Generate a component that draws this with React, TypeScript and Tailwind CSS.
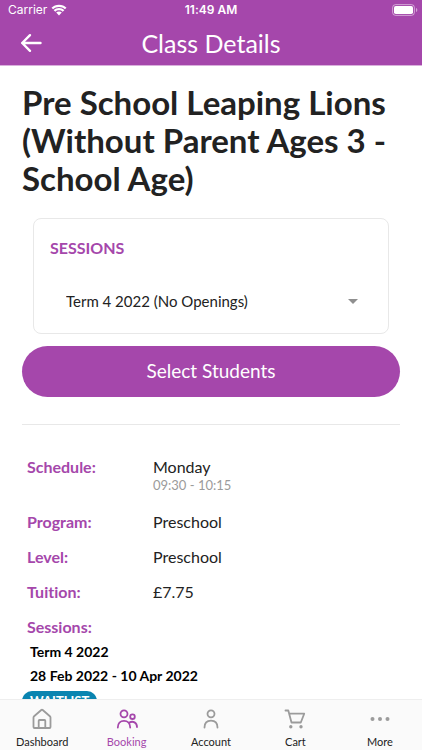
import type { ReactNode } from 'react'

interface DetailRowProps {
  label: string
  children?: ReactNode
}

interface TabProps {
  label: string
  active?: boolean
  children: ReactNode
}

function DetailRow({ label, children }: DetailRowProps) {
  return (
    <div className="flex">
      <dt className="w-[126px] shrink-0 font-bold text-[#a547ab]">{label}</dt>
      <dd className="text-[#222222]">{children}</dd>
    </div>
  )
}

function Tab({ label, active = false, children }: TabProps) {
  return (
    <a
      href="#"
      aria-current={active ? 'page' : undefined}
      className={
        active
          ? 'flex flex-1 flex-col items-center gap-1 text-[#a547ab]'
          : 'flex flex-1 flex-col items-center gap-1 text-[#9b9b9b]'
      }
    >
      <svg
        viewBox="0 0 22 22"
        className="size-[22px]"
        fill="none"
        stroke="currentColor"
        strokeWidth="1.8"
        strokeLinecap="round"
        strokeLinejoin="round"
        aria-hidden="true"
      >
        {children}
      </svg>
      <span className={active ? 'text-[11px] leading-4' : 'text-[11px] leading-4 text-[#222222]'}>
        {label}
      </span>
    </a>
  )
}

function StatusBar() {
  return (
    <div className="grid h-5 grid-cols-3 items-center px-2 font-[Inter,sans-serif] text-[12px]">
      <div className="flex items-center gap-1">
        <span>Carrier</span>
        <svg viewBox="0 0 16 12" className="h-3 w-4" fill="currentColor" aria-label="Wi-Fi">
          <path d="M8 .8C5 .8 2.500 1.900.500 3.700L2.100 5.300C3.700 3.900 5.700 3 8 3s4.300.900 5.900 2.300l1.600-1.600C13.500 1.900 11 .8 8 .8z" />
          <path d="M8 4.100c-2 0-3.900.800-5.300 2.100l1.600 1.500C5.300 6.800 6.500 6.300 8 6.300s2.700.500 3.700 1.400l1.600-1.500C11.900 4.900 10 4.100 8 4.100z" />
          <path d="M8 7.400c-1.100 0-2.100.400-2.800 1.200L8 11.400l2.800-2.800C10.100 7.800 9.100 7.400 8 7.400z" />
        </svg>
      </div>
      <span className="text-center font-semibold">11:49 AM</span>
      <svg viewBox="0 0 26 12" className="-mr-1 h-3 w-[26px] justify-self-end" aria-label="Battery full">
        <rect x=".6" y=".6" width="21.800" height="10.800" rx="3" fill="none" stroke="white" strokeOpacity=".5" />
        <rect x="2" y="2" width="19" height="8" rx="1.800" fill="white" />
        <path d="M24 4v4c.800-.300 1.300-1.100 1.300-2S24.800 4.300 24 4z" fill="white" fillOpacity=".5" />
      </svg>
    </div>
  )
}

export default function App() {
  return (
    <div className="flex h-dvh flex-col bg-white font-[Lato,sans-serif] text-[#222222] [font-variant-ligatures:none]">
      <header className="shrink-0 border-b border-[#d9b0dc] bg-[#a547ab] text-white">
        <StatusBar />
        <div className="grid h-[45px] grid-cols-[40px_1fr_40px] items-center px-5">
          <button type="button" aria-label="Back">
            <svg
              viewBox="0 0 22 20"
              className="h-5 w-[22px]"
              fill="none"
              stroke="currentColor"
              strokeWidth="2.400"
              strokeLinecap="round"
              strokeLinejoin="round"
            >
              <path d="M20.500 10H2.200M10 2.200L2.200 10l7.800 7.800" />
            </svg>
          </button>
          <h1 className="text-center text-[25px] leading-8">Class Details</h1>
        </div>
      </header>

      <main className="min-h-0 flex-1 overflow-hidden px-[22px] pt-[17px]">
        <h2 className="text-[33px] leading-[38px] font-bold">
          Pre School Leaping Lions (Without Parent Ages 3 - School Age)
        </h2>

        <section className="mx-[11px] mt-[21px] rounded-lg border border-[#e8e8e8] px-4 pt-[19px] pb-[14px]">
          <label htmlFor="session" className="block text-[16px] leading-5 font-bold text-[#a547ab]">
            SESSIONS
          </label>
          <div className="relative mt-[25px]">
            <select
              id="session"
              className="h-9 w-full appearance-none bg-transparent px-4 text-[15px] text-[#222222]"
            >
              <option>Term 4 2022 (No Openings)</option>
            </select>
            <svg
              viewBox="0 0 10 5"
              className="pointer-events-none absolute top-4 right-[14px] h-[5px] w-[10px]"
              fill="#8f8f8f"
              aria-hidden="true"
            >
              <path d="M0 0h10L5 5z" />
            </svg>
          </div>
        </section>

        <button
          type="button"
          className="mt-3 h-[51px] w-full rounded-full bg-[#a547ab] text-[19px] text-white"
        >
          Select Students
        </button>

        <hr className="mt-[27px] border-[#e8e8e8]" />

        <dl className="mt-8 flex flex-col gap-[15px] px-[5px] text-[16px] leading-5">
          <DetailRow label="Schedule:">
            <p>Monday</p>
            <p className="mb-1 text-[13px] leading-4 text-[#9b9b9b]">09:30 - 10:15</p>
          </DetailRow>
          <DetailRow label="Program:">Preschool</DetailRow>
          <DetailRow label="Level:">Preschool</DetailRow>
          <DetailRow label="Tuition:">£7.75</DetailRow>
          <DetailRow label="Sessions:" />
        </dl>

        <div className="mt-[3px] px-2 text-[14px] leading-6 font-bold text-black">
          <p>Term 4 2022</p>
          <p>28 Feb 2022 - 10 Apr 2022</p>
        </div>
        <span className="mt-[3px] inline-block rounded-full bg-[#0a84b0] px-2 text-[13px] leading-5 font-bold text-white">
          WAITLIST
        </span>
      </main>

      <nav className="flex shrink-0 border-t border-[#eeeeee] bg-[#fafafa] pt-2">
        <Tab label="Dashboard">
          <path d="M2.500 9.500v9.500q0 1 1 1h15q1 0 1-1V9.500q0-.8-.6-1.300L11.700 2q-.7-.6-1.400 0L3.100 8.200q-.6.5-.6 1.300z" />
          <path d="M7.700 20v-7.300q0-.7.700-.7h5.200q.7 0 .7.700V20" />
        </Tab>
        <Tab label="Booking" active>
          <circle cx="8" cy="5.800" r="3.500" />
          <circle cx="16.500" cy="8.700" r="2.300" />
          <path d="M1.800 19.500c0-4 2.500-6.700 6.200-6.700s6.200 2.700 6.200 6.700" />
          <path d="M13.300 14.600c3.800-2.200 7.700.2 7.700 4.400" />
        </Tab>
        <Tab label="Account">
          <circle cx="11" cy="5.800" r="3.500" />
          <path d="M4.500 19.500c0-4.300 2.600-6.900 6.500-6.900s6.500 2.600 6.500 6.900" />
        </Tab>
        <Tab label="Cart">
          <path d="M1.500 2.500h2.800L7.500 14.500h9.300l3.400-8.800H5.200" />
          <circle cx="6.800" cy="18.800" r=".8" fill="currentColor" />
          <circle cx="17" cy="18.800" r=".8" fill="currentColor" />
        </Tab>
        <Tab label="More">
          <g fill="currentColor" stroke="none">
            <circle cx="3.500" cy="11" r="2" />
            <circle cx="11" cy="11" r="2" />
            <circle cx="18.500" cy="11" r="2" />
          </g>
        </Tab>
      </nav>
    </div>
  )
}
